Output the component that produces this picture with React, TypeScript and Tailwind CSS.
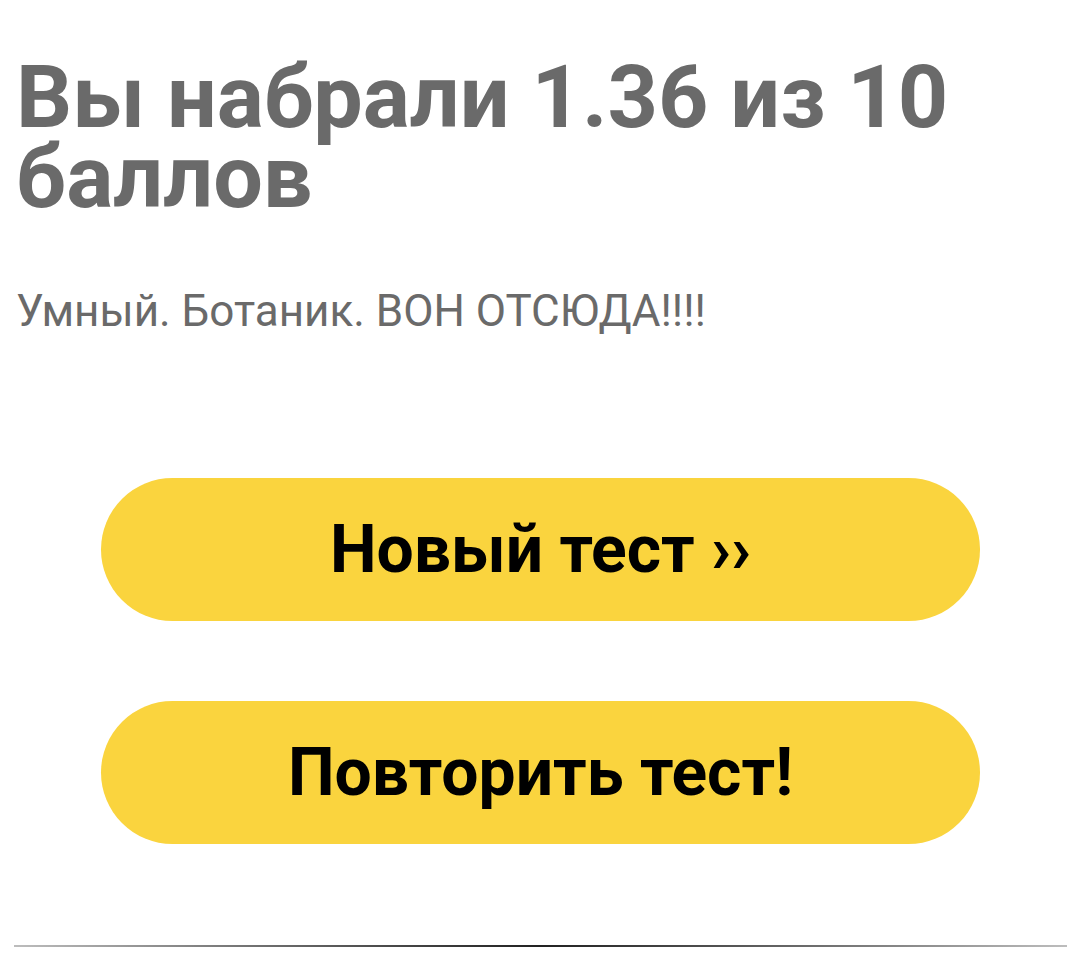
export default function App() {
  return (
    <div className="min-h-[954px] w-[1075px] bg-white font-['Roboto',sans-serif]">
      <div className="px-[16px] pt-[57px]">
        <h1 className="text-[88px] font-bold leading-[80px] text-[#6a6a6a]">Вы набрали 1.36 из 10 баллов</h1>
        <p className="mt-[64px] text-[44px] leading-[60px] text-[#6a6a6a]">Умный. Ботаник. ВОН ОТСЮДА!!!!</p>
      </div>
      <div className="mt-[137px] flex flex-col items-center gap-[80px] pl-[6px]">
        <button className="flex h-[143px] w-[879px] items-center justify-center rounded-full bg-[#fad43e] text-[66px] font-bold text-black">
          Новый тест ››
        </button>
        <button className="flex h-[143px] w-[879px] items-center justify-center rounded-full bg-[#fad43e] text-[66px] font-bold text-black">
          Повторить тест!
        </button>
      </div>
      <div className="ml-[14px] mr-[8px] mt-[101px] h-[2px] bg-gradient-to-r from-[#bdbdbd] via-[#222222] to-[#bdbdbd]" />
    </div>
  )
}
